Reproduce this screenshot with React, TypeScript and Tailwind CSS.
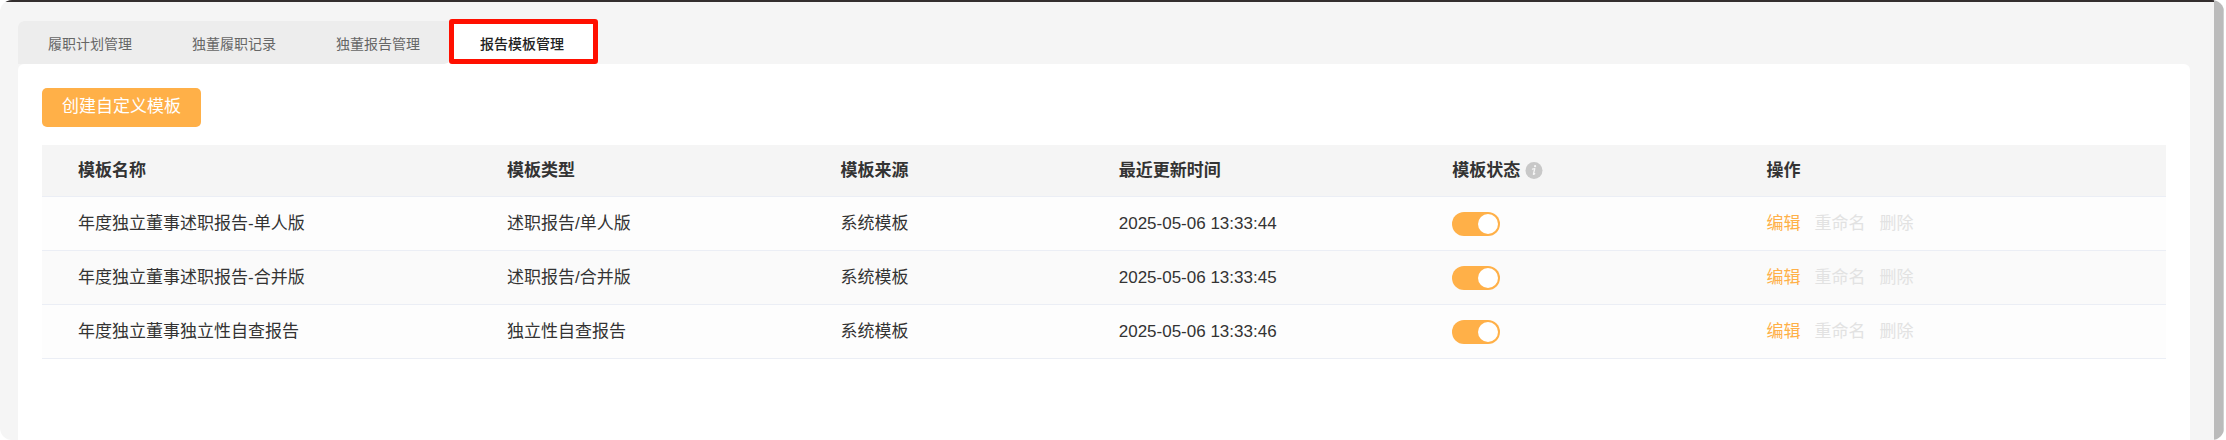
import { useState } from "react";

const tabs = ["履职计划管理", "独董履职记录", "独董报告管理", "报告模板管理"];

const templates = [
  { name: "年度独立董事述职报告-单人版", type: "述职报告/单人版", source: "系统模板", updatedAt: "2025-05-06 13:33:44" },
  { name: "年度独立董事述职报告-合并版", type: "述职报告/合并版", source: "系统模板", updatedAt: "2025-05-06 13:33:45" },
  { name: "年度独立董事独立性自查报告", type: "独立性自查报告", source: "系统模板", updatedAt: "2025-05-06 13:33:46" },
];

const headCell = "h-[52px] pl-9 font-bold border-b border-[#ebeef5]";
const bodyCell = "h-[54px] pl-9 border-b border-[#ebeef5]";

function InfoIcon() {
  return (
    <svg viewBox="0 0 18 18" className="size-[18px] shrink-0" aria-hidden="true">
      <circle cx="9" cy="8.5" r="8.5" fill="#c8c8c8" />
      <circle cx="10.1" cy="4.2" r="1.1" fill="#f5f5f5" />
      <path
        d="M7.5 7.1 L9.8 6.7 L8.4 12.1 Q8.3 12.8 9.7 11.7"
        fill="none"
        stroke="#f5f5f5"
        strokeWidth="1.3"
        strokeLinecap="round"
        strokeLinejoin="round"
      />
    </svg>
  );
}

function Toggle({ label }: { label: string }) {
  const [on, setOn] = useState(true);
  return (
    <label className="relative block w-12 h-6">
      <input
        type="checkbox"
        role="switch"
        aria-label={label}
        checked={on}
        onChange={() => setOn(!on)}
        className="peer block appearance-none w-12 h-6 rounded-full bg-gray-300 checked:bg-[#ffb048] cursor-pointer"
      />
      <span className="absolute top-[2px] left-[2px] size-5 rounded-full bg-white pointer-events-none peer-checked:left-[26px]" />
    </label>
  );
}

export default function App() {
  const [active, setActive] = useState(3);

  return (
    <div className="min-h-screen flex bg-white font-['Liberation_Sans','Noto_Sans_CJK_SC',sans-serif] text-[#333]">
      <div className="flex-1 min-w-0 flex rounded-xl overflow-hidden mr-[2px]">
        <main className="flex-1 min-w-0 flex flex-col bg-[#f5f5f5] border-t-2 border-[#332e2e] pt-[19px] pl-[18px] pr-6">
          <div role="tablist" className="flex self-start h-[43px] bg-white rounded-tl-md">
            {tabs.map((tab, i) => (
              <button
                key={tab}
                role="tab"
                aria-selected={active === i}
                onClick={() => setActive(i)}
                className={`relative px-[30px] pt-[2px] text-sm cursor-pointer first:rounded-tl-md ${
                  active === i ? "bg-white font-medium text-[#222]" : "bg-[#ededed] text-[#666]"
                } ${i === active - 1 ? "rounded-br-md" : ""}`}
              >
                {tab}
                {active === i && (
                  <span className="absolute -top-[2px] bottom-0 -left-px -right-[4px] border-[5px] border-[#ff0f00] rounded-[3px]" />
                )}
              </button>
            ))}
          </div>

          <section className="flex-1 bg-white rounded-t-md px-6 pt-6">
            <button className="block h-[39px] px-5 pb-[2px] rounded-[5px] bg-[#ffb048] text-white text-[17px] leading-6 cursor-pointer">
              创建自定义模板
            </button>

            <table className="w-full mt-[18px] table-fixed border-separate border-spacing-0 text-[17px] leading-6 text-left">
              <colgroup>
                <col className="w-[20.2%]" />
                <col className="w-[15.7%]" />
                <col className="w-[13.1%]" />
                <col className="w-[15.7%]" />
                <col className="w-[14.8%]" />
                <col />
              </colgroup>
              <thead>
                <tr className="bg-[#f5f5f5]">
                  <th className={headCell}>模板名称</th>
                  <th className={headCell}>模板类型</th>
                  <th className={headCell}>模板来源</th>
                  <th className={headCell}>最近更新时间</th>
                  <th className={headCell}>
                    <span className="flex items-center gap-[5px]">
                      模板状态
                      <InfoIcon />
                    </span>
                  </th>
                  <th className={headCell}>操作</th>
                </tr>
              </thead>
              <tbody>
                {templates.map(t => (
                  <tr key={t.name} className="odd:bg-[#fdfdfd] even:bg-[#fafafa]">
                    <td className={bodyCell}>{t.name}</td>
                    <td className={bodyCell}>{t.type}</td>
                    <td className={bodyCell}>{t.source}</td>
                    <td className={bodyCell}>{t.updatedAt}</td>
                    <td className={bodyCell}>
                      <Toggle label={t.name} />
                    </td>
                    <td className={bodyCell}>
                      <div className="flex gap-[14px]">
                        <button className="text-[#ffb048] cursor-pointer">编辑</button>
                        <button disabled className="text-[#e2e2e2]">重命名</button>
                        <button disabled className="text-[#e2e2e2]">删除</button>
                      </div>
                    </td>
                  </tr>
                ))}
              </tbody>
            </table>
          </section>
        </main>
        <div className="w-[10px] bg-[#bbb] border-r border-[#d0d0d0]" />
      </div>
    </div>
  );
}
